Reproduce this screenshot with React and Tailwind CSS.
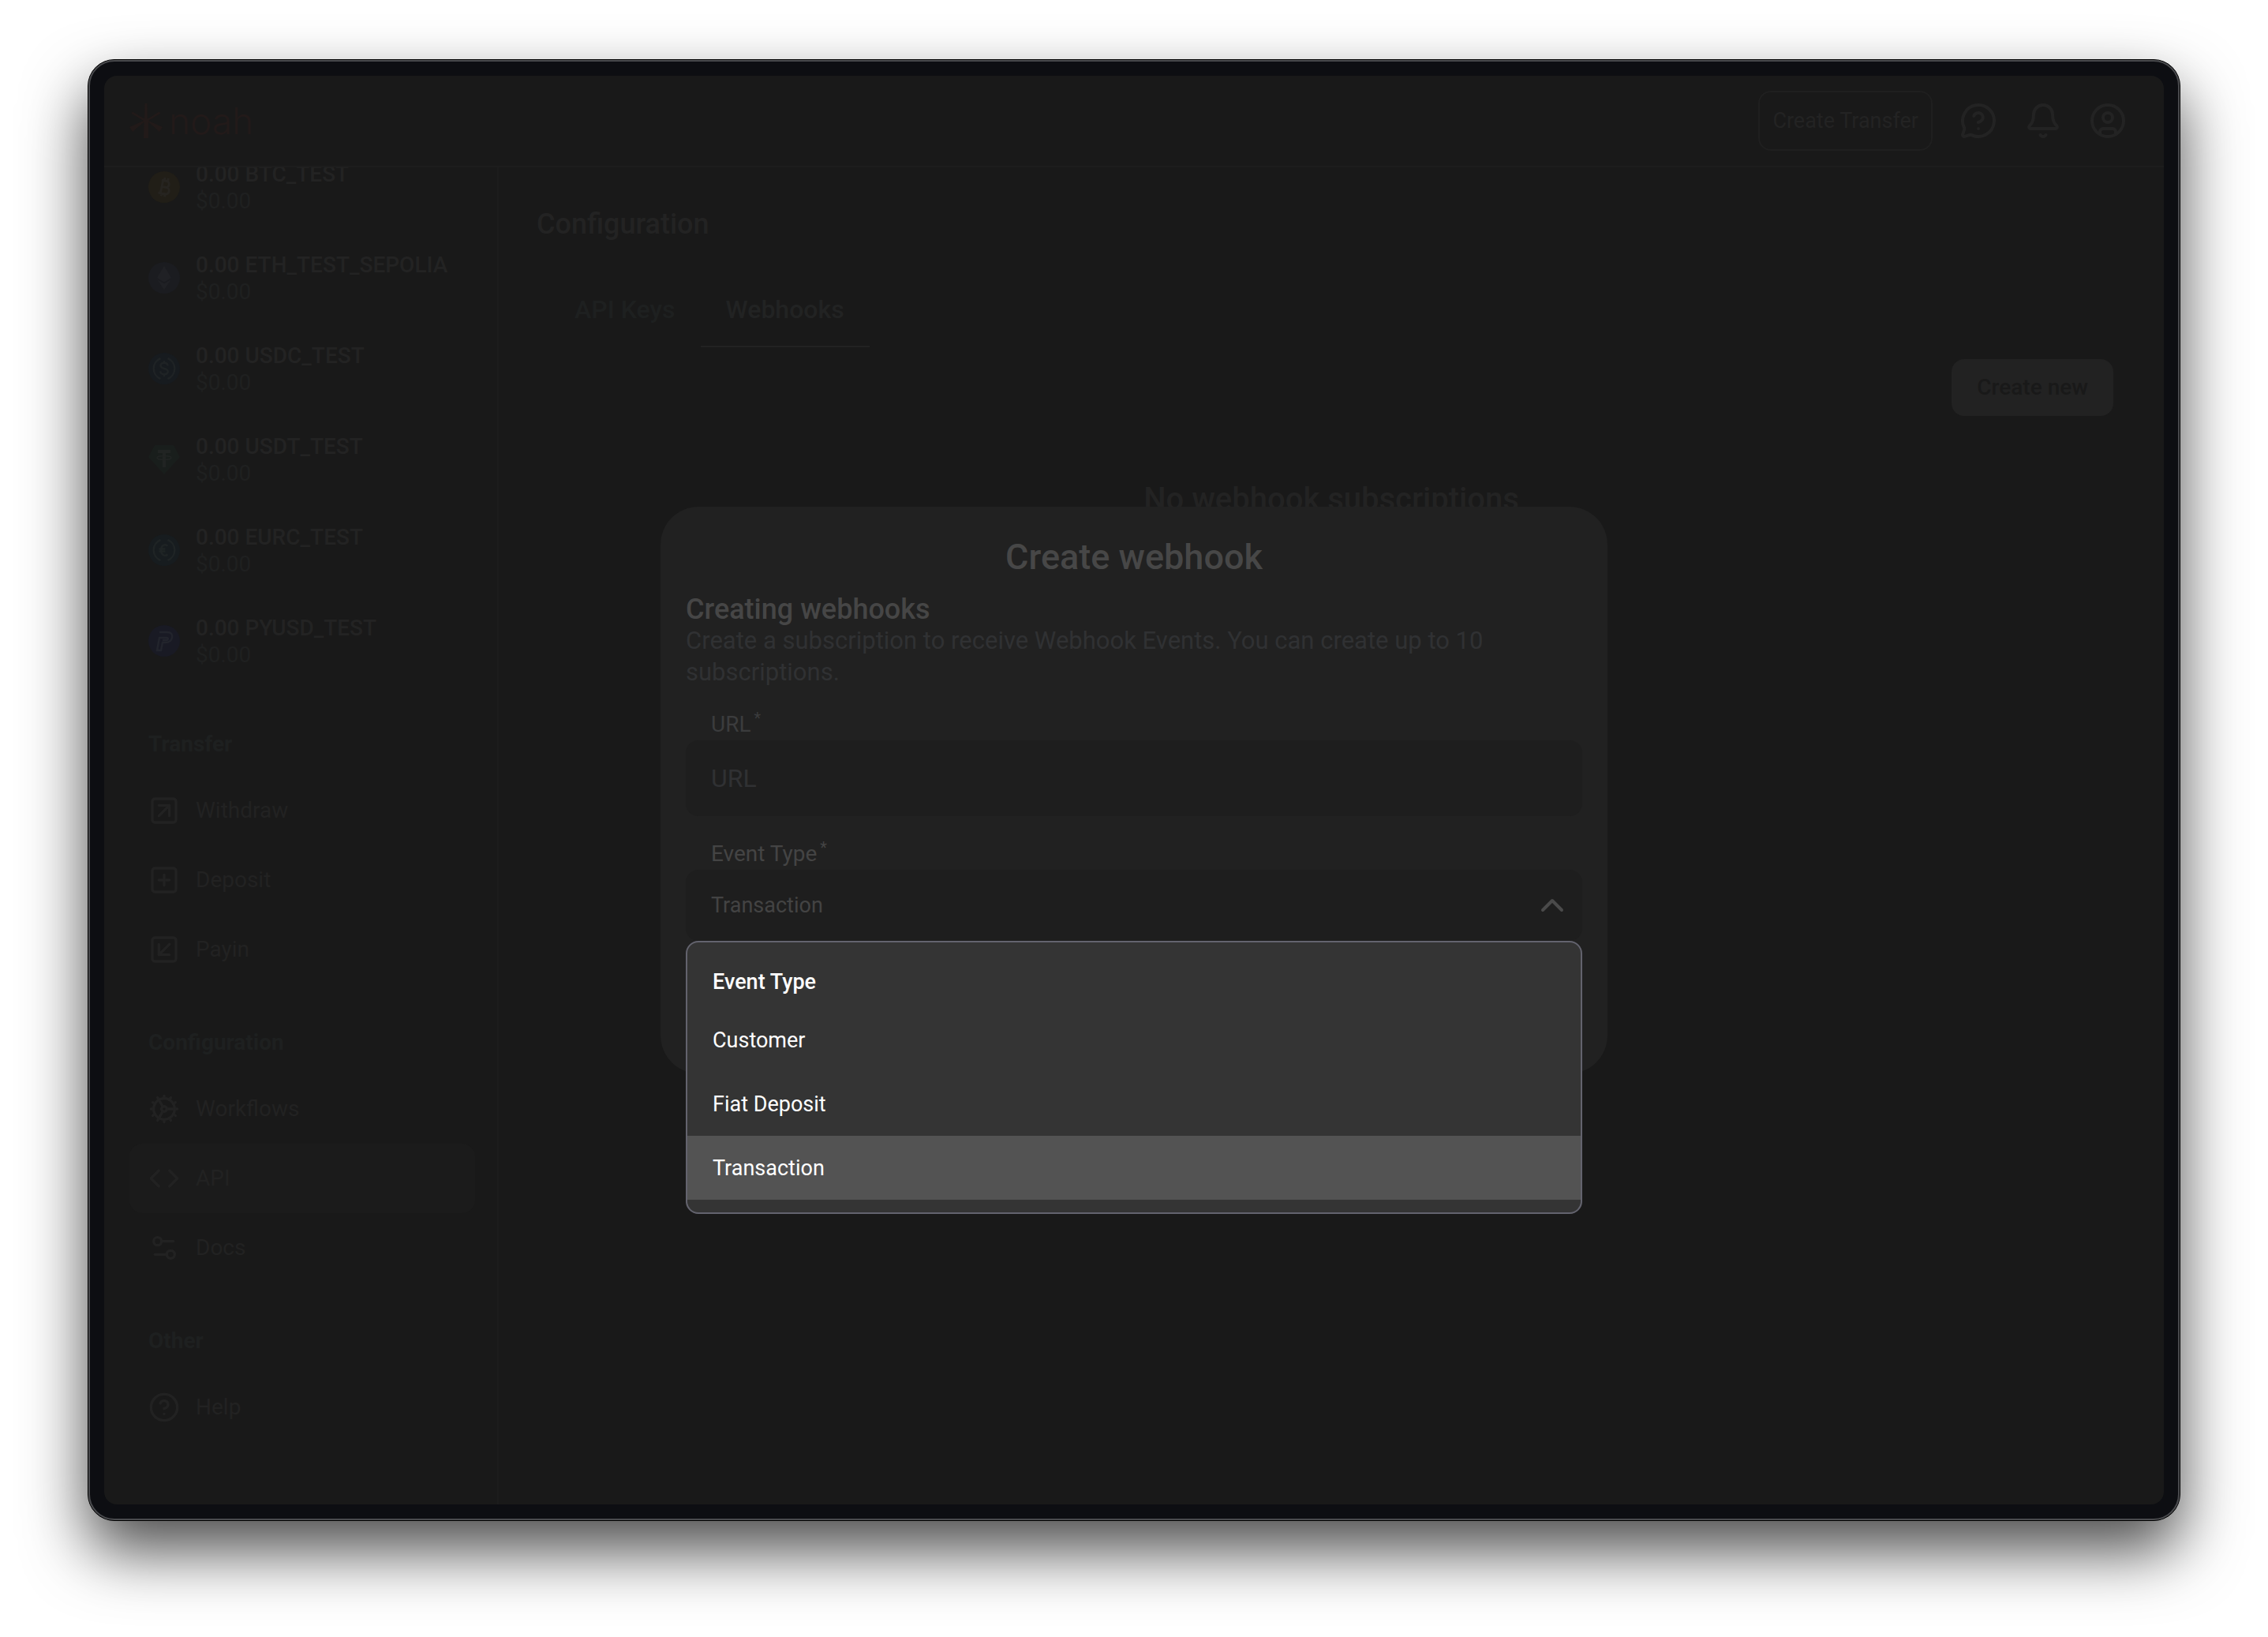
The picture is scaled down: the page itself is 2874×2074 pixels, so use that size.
import { useState } from 'react';
import {
    Bell,
    ChevronUp,
    CircleHelp,
    CircleUser,
    Code,
    Cog,
    MessageCircleQuestion,
    Settings2,
    SquareArrowDownLeft,
    SquareArrowUpRight,
    SquarePlus,
} from 'lucide-react';

// --- Coin icons ---
const BtcIcon = () => (
    <svg viewBox="0 0 40 40" className="size-10 shrink-0" aria-hidden="true">
        <circle cx="20" cy="20" r="20" fill="#211e17" />
        <g fill="none" stroke="#262420" strokeWidth="3" transform="rotate(12 20 20)">
            <path d="M15 12h6.500a4 4 0 0 1 0 8H16M16 20h7a4.200 4.200 0 0 1 0 8.400H14M17 12v16.400M18.500 8v4M23 8v4M18.500 28v4M23 28v4" />
        </g>
    </svg>
);

const EthIcon = () => (
    <svg viewBox="0 0 40 40" className="size-10 shrink-0" aria-hidden="true">
        <circle cx="20" cy="20" r="20" fill="#1b1c20" />
        <path d="M20 5l9 15-9 5.500L11 20z" fill="#202125" />
        <path d="M20 27.500l9-5.500-9 13-9-13z" fill="#202125" />
    </svg>
);

const UsdcIcon = () => (
    <svg viewBox="0 0 40 40" className="size-10 shrink-0" aria-hidden="true">
        <circle cx="20" cy="20" r="20" fill="#171b1f" />
        <g fill="none" stroke="#1f2325" strokeWidth="2.500">
            <path d="M15.500 7a14 14 0 0 0 0 26M24.500 7a14 14 0 0 1 0 26" />
            <path d="M24.500 16.500c0-2.500-2-3.700-4.500-3.700s-4.500 1.200-4.500 3.500c0 4.900 9.200 2.400 9.200 7.200 0 2.500-2.200 3.700-4.700 3.700s-4.700-1.200-4.700-3.900M20 10v3M20 27v3" />
        </g>
    </svg>
);

const UsdtIcon = () => (
    <svg viewBox="0 0 40 40" className="size-10 shrink-0" aria-hidden="true">
        <path d="M8 2h24l8 15-20 22L0 17z" fill="#191e1c" />
        <path d="M12 8h16v4h-6v18h-4V12h-6z" fill="#212423" />
        <ellipse cx="20" cy="18" rx="9" ry="2.500" fill="none" stroke="#212423" strokeWidth="1.500" />
    </svg>
);

const EurcIcon = () => (
    <svg viewBox="0 0 40 40" className="size-10 shrink-0" aria-hidden="true">
        <circle cx="20" cy="20" r="20" fill="#171c1f" />
        <g fill="none" stroke="#1f2425" strokeWidth="2.500">
            <path d="M15.500 7a14 14 0 0 0 0 26M24.500 7a14 14 0 0 1 0 26" />
            <path d="M24.500 14.500c-4-3-8.500 0-8.500 5.500s4.500 8.500 8.500 5.500M13.500 18.500h8M13.500 21.500h8" />
        </g>
    </svg>
);

const PyusdIcon = () => (
    <svg viewBox="0 0 40 40" className="size-10 shrink-0" aria-hidden="true">
        <circle cx="20" cy="20" r="20" fill="#191a24" />
        <path d="M14 9h10c5 0 7 3 6 7s-4 6-8 6h-4l-2 10h-5l3-16h9c3 0 2 3 0 3h-5" fill="none" stroke="#22242c" strokeWidth="2.500" />
    </svg>
);

const NoahMark = () => (
    <svg viewBox="0 0 42 44" className="h-11 w-[42px]" fill="currentColor" aria-hidden="true">
        <path d="M19.500 0h3l.4 19.500 14.900-9 1.500 2.300L24 22 42 30l-4 6-14-12.500L24 44h-6l.500-20.500L4 36l-4-6 18-8L2.500 12.800 4 10.500l15 9z" />
    </svg>
);

// --- Data ---
const TOKENS = [
    { name: 'BTC_TEST', icon: BtcIcon },
    { name: 'ETH_TEST_SEPOLIA', icon: EthIcon },
    { name: 'USDC_TEST', icon: UsdcIcon },
    { name: 'USDT_TEST', icon: UsdtIcon },
    { name: 'EURC_TEST', icon: EurcIcon },
    { name: 'PYUSD_TEST', icon: PyusdIcon },
];

const NAV_SECTIONS = [
    {
        title: 'Transfer',
        items: [
            { name: 'Withdraw', icon: SquareArrowUpRight },
            { name: 'Deposit', icon: SquarePlus },
            { name: 'Payin', icon: SquareArrowDownLeft },
        ],
    },
    {
        title: 'Configuration',
        items: [
            { name: 'Workflows', icon: Cog },
            { name: 'API', icon: Code, active: true },
            { name: 'Docs', icon: Settings2 },
        ],
    },
    {
        title: 'Other',
        items: [{ name: 'Help', icon: CircleHelp }],
    },
];

const EVENT_TYPES = ['Customer', 'Fiat Deposit', 'Transaction'];

// --- Header ---
const Header = () => (
    <header className="flex h-[116px] shrink-0 items-center justify-between border-b-2 border-[#1d1d1d] pl-8 pr-[47px]">
        <a href="#home" className="flex items-center gap-2 text-[#221a19]">
            <NoahMark />
            <span className="font-[Inter,sans-serif] text-[46px] leading-none font-light">noah</span>
        </a>
        <div className="flex items-center gap-[34px] text-[#232323]">
            <button className="h-[76px] rounded-2xl border-2 border-[#1f1f1f] px-4 text-[27px]">Create Transfer</button>
            <button aria-label="Support"><MessageCircleQuestion className="size-12" /></button>
            <button aria-label="Notifications"><Bell className="size-12" /></button>
            <button aria-label="Account"><CircleUser className="size-12" /></button>
        </div>
    </header>
);

// --- Sidebar, scrolled to its end ---
const Sidebar = () => (
    <aside className="flex w-[500px] shrink-0 flex-col justify-end overflow-hidden border-r-2 border-[#1c1c1c] pr-7 pb-[79px] pl-8">
        <ul className="shrink-0">
            {TOKENS.map(({ name, icon: Icon }) => (
                <li key={name} className="flex h-[115px] items-center gap-5 px-6">
                    <Icon />
                    <div className="pt-0.5 text-[28px] leading-[34px]">
                        <p className="font-medium text-[#232323]">0.00 {name}</p>
                        <p className="text-[#1f2020]">$0.00</p>
                    </div>
                </li>
            ))}
        </ul>
        {NAV_SECTIONS.map((section) => (
            <nav key={section.title} className="mt-8 shrink-0" aria-label={section.title}>
                <h2 className="flex h-[82px] items-center px-6 pt-0.5 text-[28px] font-bold text-[#1e2020]">{section.title}</h2>
                {section.items.map(({ name, icon: Icon, active }) => (
                    <a
                        key={name}
                        href={`#${name.toLowerCase()}`}
                        className={`flex h-[88px] items-center gap-5 rounded-2xl px-6 text-[28px] text-[#222222] ${active ? 'bg-[#1b1b1b]' : ''}`}
                    >
                        <Icon className="size-10" />
                        {name}
                    </a>
                ))}
            </nav>
        ))}
    </aside>
);

// --- Webhooks page behind the dialog ---
const WebhooksPage = () => (
    <main className="min-w-0 flex-1 pt-[50px] pr-16 pl-12">
        <h1 className="text-[36px] leading-[44px] font-medium text-[#232323]">Configuration</h1>
        <div className="mt-[38px] flex px-4 text-[32px] font-medium">
            <button className="h-24 border-b-2 border-transparent px-8 pt-0.5 text-[#1e2020]">API Keys</button>
            <button className="h-24 border-b-2 border-[#222222] px-8 pt-0.5 text-[#222323]">Webhooks</button>
        </div>
        <div className="mt-[15px] flex justify-end">
            <button className="h-[72px] rounded-2xl bg-[#222222] px-8 text-[28px] font-medium text-[#191919]">Create new</button>
        </div>
        <p className="-mr-4 mt-[82px] text-center text-[40px] leading-[48px] font-medium text-[#232323]">No webhook subscriptions</p>
    </main>
);

// --- Create webhook dialog ---
const CreateWebhookModal = () => {
    const [url, setUrl] = useState('');
    const [eventType, setEventType] = useState('Transaction');

    return (
        <div className="absolute inset-0 flex items-center justify-center">
            <form role="dialog" aria-labelledby="modal-title" className="w-full max-w-[1200px] rounded-[48px] bg-[#212121] px-8 pt-[34px] pb-[168px]">
                <h2 id="modal-title" className="text-center text-[45px] leading-[60px] font-medium text-[#474747]">Create webhook</h2>
                <h3 className="mt-4 text-[36px] leading-[40px] font-medium text-[#464646]">Creating webhooks</h3>
                <p className="text-[31px] leading-[40px] text-[#303133]">
                    Create a subscription to receive Webhook Events. You can create up to 10 subscriptions.
                </p>

                <label htmlFor="url" className="mt-[26px] block px-8 text-[28px] leading-[40px] text-[#3b3c3d]">URL<sup className="ml-1 text-[20px] leading-none">*</sup></label>
                <input
                    id="url"
                    type="text"
                    placeholder="URL"
                    value={url}
                    onChange={(e) => setUrl(e.target.value)}
                    className="block h-24 w-full rounded-2xl bg-[#1e1e1e] px-8 text-[32px] text-[#454545] placeholder:text-[#303133]"
                />

                <label htmlFor="event-type" className="mt-7 block px-8 text-[28px] leading-[40px] text-[#444444]">Event Type<sup className="ml-1 text-[20px] leading-none">*</sup></label>
                <div className="relative">
                    <select
                        id="event-type"
                        value={eventType}
                        onChange={(e) => setEventType(e.target.value)}
                        className="block h-[90px] w-full appearance-none rounded-2xl bg-[#1e1e1e] px-8 text-[27px] text-[#434343]"
                    >
                        {EVENT_TYPES.map((type) => <option key={type}>{type}</option>)}
                    </select>
                    <ChevronUp className="pointer-events-none absolute inset-y-0 right-3.5 my-auto size-12 text-[#4a4a4a]" />

                    {/* Open list */}
                    <div className="absolute inset-x-0 top-full overflow-hidden rounded-2xl border-2 border-[#63636e] bg-[#343434] py-4 text-[27px] text-white">
                        <p id="event-type-list" className="flex h-[67px] items-center px-8 pt-0.5 font-medium">Event Type</p>
                        <ul role="listbox" aria-labelledby="event-type-list">
                            {EVENT_TYPES.map((type) => (
                                <li
                                    key={type}
                                    role="option"
                                    aria-selected={type === eventType}
                                    onClick={() => setEventType(type)}
                                    className={`flex h-[81px] items-center px-8 pt-0.5 ${type === eventType ? 'bg-[#535353]' : ''}`}
                                >
                                    {type}
                                </li>
                            ))}
                        </ul>
                    </div>
                </div>
            </form>
        </div>
    );
};

export default function App() {
    return (
        <div className="flex h-screen flex-col bg-white px-[111px] pt-[75px] pb-[147px] font-[Roboto,sans-serif]">
            {/* Window frame */}
            <div className="flex min-h-0 flex-1 rounded-[34px] border border-black bg-[#0d0e12] shadow-[0_38px_80px_rgba(0,0,0,0.7)]">
                <div className="flex min-w-0 flex-1 rounded-[33px] border-2 border-[#4a4b4e] p-[18px]">
                    <div className="relative flex min-w-0 flex-1 flex-col overflow-hidden rounded-2xl bg-[#191919]">
                        <Header />
                        <div className="flex min-h-0 flex-1">
                            <Sidebar />
                            <WebhooksPage />
                        </div>
                        <CreateWebhookModal />
                    </div>
                </div>
            </div>
        </div>
    );
}
